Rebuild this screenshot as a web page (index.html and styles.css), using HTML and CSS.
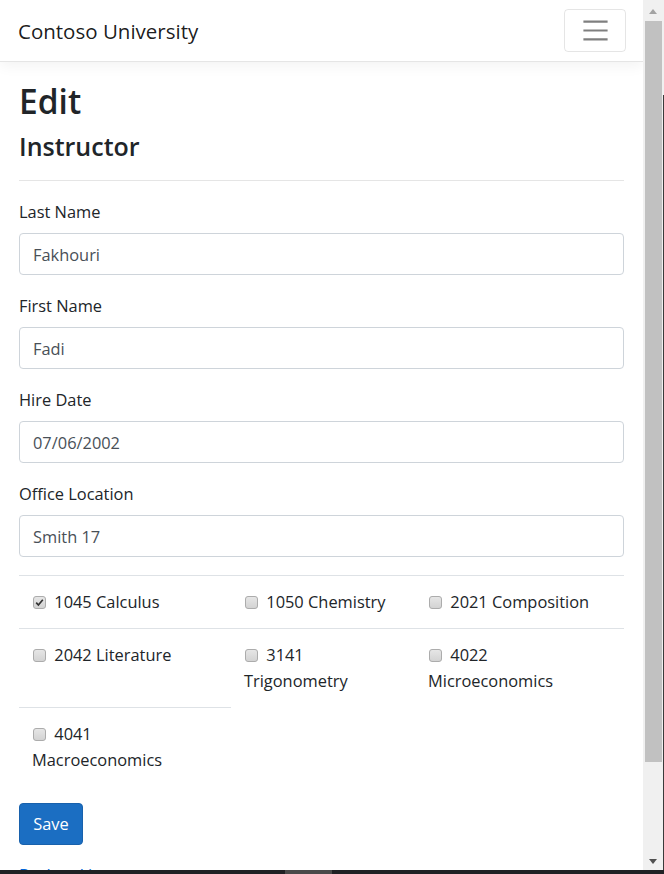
FILE: index.html
```html
<!DOCTYPE html>
<html lang="en">
<head>
<meta charset="utf-8">
<title>Edit - Contoso University</title>
<link rel="stylesheet" href="styles.css">
</head>
<body>
<div class="page">
  <header class="navbar">
    <a class="brand" href="#">Contoso University</a>
    <button class="toggler" type="button" aria-label="Toggle navigation">
      <svg class="toggler-icon" viewBox="0 0 30 30" width="33" height="33" aria-hidden="true">
        <path d="M4 7h22M4 15h22M4 23h22" stroke="rgba(0,0,0,0.5)" stroke-width="2" stroke-linecap="butt" fill="none"/>
      </svg>
    </button>
  </header>

  <main class="container">
    <h1 class="title">Edit</h1>
    <h4 class="subtitle">Instructor</h4>
    <hr class="rule">

    <form class="form">
      <div class="form-group">
        <label class="label" for="ln">Last Name</label>
        <input class="input" id="ln" type="text" value="Fakhouri">
      </div>
      <div class="form-group">
        <label class="label" for="fn">First Name</label>
        <input class="input" id="fn" type="text" value="Fadi">
      </div>
      <div class="form-group">
        <label class="label" for="hd">Hire Date</label>
        <input class="input" id="hd" type="text" value="07/06/2002">
      </div>
      <div class="form-group">
        <label class="label" for="ol">Office Location</label>
        <input class="input" id="ol" type="text" value="Smith 17">
      </div>

      <table class="courses">
        <colgroup>
          <col class="c1"><col class="c2"><col class="c3">
        </colgroup>
        <tr>
          <td><input class="cb" type="checkbox" checked> 1045 Calculus</td>
          <td><input class="cb" type="checkbox"> 1050 Chemistry</td>
          <td><input class="cb" type="checkbox"> 2021 Composition</td>
        </tr>
        <tr>
          <td><input class="cb" type="checkbox"> 2042 Literature</td>
          <td><input class="cb" type="checkbox"> 3141<br>Trigonometry</td>
          <td><input class="cb" type="checkbox"> 4022<br>Microeconomics</td>
        </tr>
        <tr>
          <td><input class="cb" type="checkbox"> 4041<br>Macroeconomics</td>
        </tr>
      </table>

      <div class="form-group">
        <button class="btn" type="submit">Save</button>
      </div>
    </form>
    <div class="back"><a href="#">Back to List</a></div>
  </main>
</div>

<div class="scrollbar" aria-hidden="true">
  <div class="sb-arrow sb-up"></div>
  <div class="sb-thumb"></div>
  <div class="sb-arrow sb-down"></div>
  <div class="sb-edge"></div>
</div>
<div class="taskbar" aria-hidden="true"><div class="tb-seg"></div></div>
</body>
</html>
```
FILE: styles.css
```css
html, body {
  margin: 0;
  padding: 0;
  overflow: hidden;
  background: #fff;
}
body {
  font-family: "Open Sans", "Noto Sans", sans-serif;
  font-size: 16.4px;
  line-height: 26px;
  color: #212529;
}
.page {
  width: 643px;
  height: 874px;
  overflow: hidden;
}

/* navbar */
.navbar {
  height: 61px;
  border-bottom: 1px solid #e5e5e5;
  box-shadow: 0 4px 13px rgba(0,0,0,0.05);
  display: flex;
  align-items: center;
  justify-content: space-between;
  padding: 0 17px 0 18px;
  box-sizing: content-box;
}
.brand {
  font-size: 20.5px;
  line-height: 33px;
  color: rgba(0,0,0,0.9);
  text-decoration: none;
  padding: 5px 0;
  margin-top: 2px;
}
.toggler {
  width: 62px;
  height: 43px;
  padding: 4px 13px;
  border: 1px solid rgba(0,0,0,0.1);
  border-radius: 4px;
  background: transparent;
  display: flex;
  align-items: center;
  justify-content: center;
  box-sizing: border-box;
}
.toggler-icon { display: block; }

/* main */
.container {
  padding: 17px 19px 0 19px;
}
.title {
  font-size: 33.5px;
  line-height: 42px;
  font-weight: 600;
  margin: 0;
  padding-top: 1px;
}
.subtitle {
  font-size: 25px;
  line-height: 32px;
  font-weight: 600;
  margin: 8px 0 0 0;
}
.rule {
  border: 0;
  border-top: 1px solid rgba(0,0,0,0.1);
  margin: 18px 0 17px 0;
}
.form { margin: 0; }
.form-group { margin-bottom: 17px; }
.label {
  display: block;
  padding-top: 1px;
  margin: 0 0 8px 0;
}
.input {
  display: block;
  width: 100%;
  box-sizing: border-box;
  height: 42px;
  padding: 7px 13px;
  font-family: inherit;
  font-size: 16.4px;
  line-height: 26px;
  color: #495057;
  border: 1px solid #ced4da;
  border-radius: 4px;
  background: #fff;
  margin: 0;
}

/* courses table */
.courses {
  width: 100%;
  border-collapse: collapse;
  margin: 18px 0 17px 0;
}
.courses .c1 { width: 212px; }
.courses .c2 { width: 184px; }
.courses .c3 { width: 209px; }
.courses td {
  padding: 13px;
  border-top: 1px solid #dee2e6;
  vertical-align: top;
  white-space: nowrap;
}
.cb {
  -webkit-appearance: none;
  appearance: none;
  width: 13px;
  height: 13px;
  margin: 0 4px 0 1px;
  vertical-align: -1px;
  border: 1px solid #acacac;
  border-radius: 3px;
  background: linear-gradient(#e6e6e6, #d3d3d3);
  box-sizing: border-box;
}
.cb:checked {
  background-image: url("data:image/svg+xml;utf8,<svg xmlns='http://www.w3.org/2000/svg' viewBox='0 0 13 13'><path d='M2.6 6.6 L5.2 9.4 L10.4 3.2' stroke='%23333' stroke-width='2' fill='none'/></svg>"), linear-gradient(#e6e6e6, #d3d3d3);
}

/* button */
.btn {
  font-family: inherit;
  font-size: 16.4px;
  line-height: 26px;
  color: #fff;
  background: #1b6ec2;
  border: 1px solid #1861ac;
  border-radius: 4px;
  padding: 7px 13px;
  width: 64px;
  height: 42px;
  box-sizing: border-box;
}
.back a {
  color: #0366d6;
  text-decoration: none;
}

/* fake window scrollbar + bottom frame */
.scrollbar {
  position: fixed;
  top: 0;
  right: 0;
  width: 21px;
  height: 870px;
  background: #f0f0f0;
}
.sb-thumb {
  position: absolute;
  left: 2px;
  top: 21px;
  width: 17px;
  height: 741px;
  background: #c1c1c1;
}
.sb-arrow {
  position: absolute;
  left: 6px;
  width: 0;
  height: 0;
  border-left: 4.5px solid transparent;
  border-right: 4.5px solid transparent;
}
.sb-up {
  top: 9px;
  border-bottom: 5px solid #a3a3a3;
}
.sb-down {
  top: 859px;
  border-top: 5px solid #505050;
}
.sb-edge {
  position: absolute;
  right: 0;
  top: 95px;
  width: 1px;
  bottom: 0;
  background: #3a3a3a;
}
.taskbar {
  position: fixed;
  left: 0;
  bottom: 0;
  width: 664px;
  height: 4px;
  background: #202124;
}
.tb-seg {
  margin-left: 285px;
  width: 47px;
  height: 4px;
  background: #4a4a4a;
}
```
